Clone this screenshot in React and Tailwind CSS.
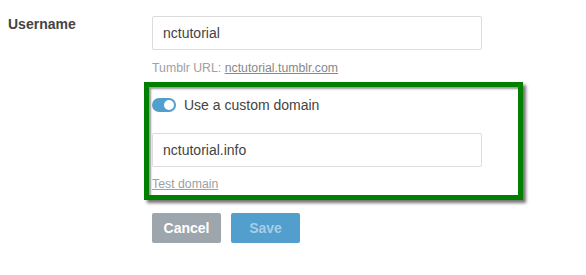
import React from 'react';

const App = () => {
    return (
        <div className="min-h-screen bg-white font-['Liberation_Sans',Arial,sans-serif] text-[#444]">
            <div className="flex">
                {/* label column */}
                <div className="w-[152px] pl-[8px] pt-[16px] text-[14px] leading-[16px] font-bold">Username</div>

                <div className="flex flex-col pt-[16px]">
                    <div className="w-[330px] h-[34px] border border-[#dcdcdc] rounded-[2px] flex items-center px-[10px] text-[14px]">
                        nctutorial
                    </div>
                    <div className="mt-[11px] text-[12.3px] leading-[14px] text-[#a0a0a0]">
                        Tumblr URL: <span className="underline text-[#888]">nctutorial.tumblr.com</span>
                    </div>

                    {/* highlighted custom domain block */}
                    <div className="mt-[7px] ml-[-8px] w-[379px] border-[5px] border-[#008000] pl-[3px] pt-[11px] pb-[4px] shadow-[3px_3px_3px_rgba(0,0,0,0.55),inset_2px_2px_2px_rgba(0,0,0,0.4)]">
                        <div className="flex items-center gap-[8px] h-[14px]">
                            <div className="w-[24px] h-[14px] rounded-full bg-[#529ecc] flex items-center justify-end pr-[2px]">
                                <div className="w-[10px] h-[10px] rounded-full bg-white" />
                            </div>
                            <span className="text-[14px] leading-[16px]">Use a custom domain</span>
                        </div>
                        <div className="mt-[21px] w-[330px] h-[34px] border border-[#dcdcdc] rounded-[2px] flex items-center px-[10px] text-[14px]">
                            nctutorial.info
                        </div>
                        <div className="mt-[10px] text-[12.3px] leading-[14px] text-[#a0a0a0] underline">Test domain</div>
                    </div>

                    <div className="mt-[13px] flex gap-[10px]">
                        <button className="w-[69px] h-[30px] rounded-[2px] bg-[#9da5ad] text-white font-bold text-[14px]">Cancel</button>
                        <button className="w-[69px] h-[30px] rounded-[2px] bg-[#529ecc] text-[#a6cde8] font-bold text-[14px]">Save</button>
                    </div>
                </div>
            </div>
        </div>
    );
};

export default App;
